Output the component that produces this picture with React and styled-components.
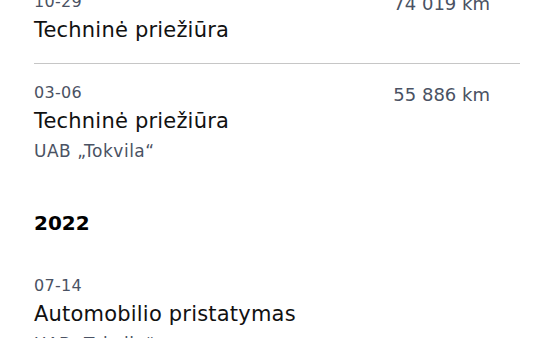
import React from "react";
import styled, { createGlobalStyle } from "styled-components";

const GlobalStyle = createGlobalStyle`
    html, body {
        margin: 0;
        padding: 0;
        background: #ffffff;
    }
    body {
        font-family: "DejaVu Sans", "Noto Sans", sans-serif;
        overflow: hidden;
    }
`;

const Page = styled.div`
    width: 554px;
    height: 338px;
    overflow: hidden;
    background: #ffffff;
`;

// the list is scrolled a little, so the first entry is cut at the top
const List = styled.div`
    display: flex;
    flex-direction: column;
    padding: 0 34px;
    margin-top: -27px;
`;

const Group = styled.section`
    display: flex;
    flex-direction: column;
`;

const YearTitle = styled.h2`
    margin: 0;
    padding: 31px 0 20px;
    font-size: 20px;
    line-height: 28px;
    font-weight: 700;
    color: #000000;
`;

const Entry = styled.div`
    display: flex;
    justify-content: space-between;
    align-items: flex-start;
    padding: 18px 0 16px;
    border-top: ${({ $first }) => ($first ? "none" : "1px solid #c6c6c6")};
`;

const Info = styled.div`
    display: flex;
    flex-direction: column;
`;

const Date = styled.div`
    font-size: 16px;
    line-height: 22px;
    letter-spacing: 0.3px;
    color: #4a5263;
`;

const Name = styled.div`
    font-size: 21px;
    line-height: 34px;
    letter-spacing: 0.2px;
    color: #111111;
`;

const Company = styled.div`
    margin-top: 2px;
    font-size: 17px;
    line-height: 22px;
    letter-spacing: 0.5px;
    color: #4a5263;
`;

const Mileage = styled.div`
    padding-right: 30px;
    font-size: 18px;
    line-height: 25px;
    color: #4a5263;
`;

const groups = [
    {
        year: null,
        entries: [
            { date: "10-29", name: "Techninė priežiūra", km: "74 019 km" },
            { date: "03-06", name: "Techninė priežiūra", company: "UAB „Tokvila“", km: "55 886 km" },
        ],
    },
    {
        year: "2022",
        entries: [
            { date: "07-14", name: "Automobilio pristatymas", company: "UAB „Tokvila“" },
        ],
    },
];

const App = () => {
    return (
        <Page>
            <GlobalStyle />
            <List>
                {groups.map((group, gi) => (
                    <Group key={gi}>
                        {group.year && <YearTitle>{group.year}</YearTitle>}
                        {group.entries.map((entry, i) => (
                            <Entry key={i} $first={i === 0}>
                                <Info>
                                    <Date>{entry.date}</Date>
                                    <Name>{entry.name}</Name>
                                    {entry.company && <Company>{entry.company}</Company>}
                                </Info>
                                {entry.km && <Mileage>{entry.km}</Mileage>}
                            </Entry>
                        ))}
                    </Group>
                ))}
            </List>
        </Page>
    );
};

export default App;
